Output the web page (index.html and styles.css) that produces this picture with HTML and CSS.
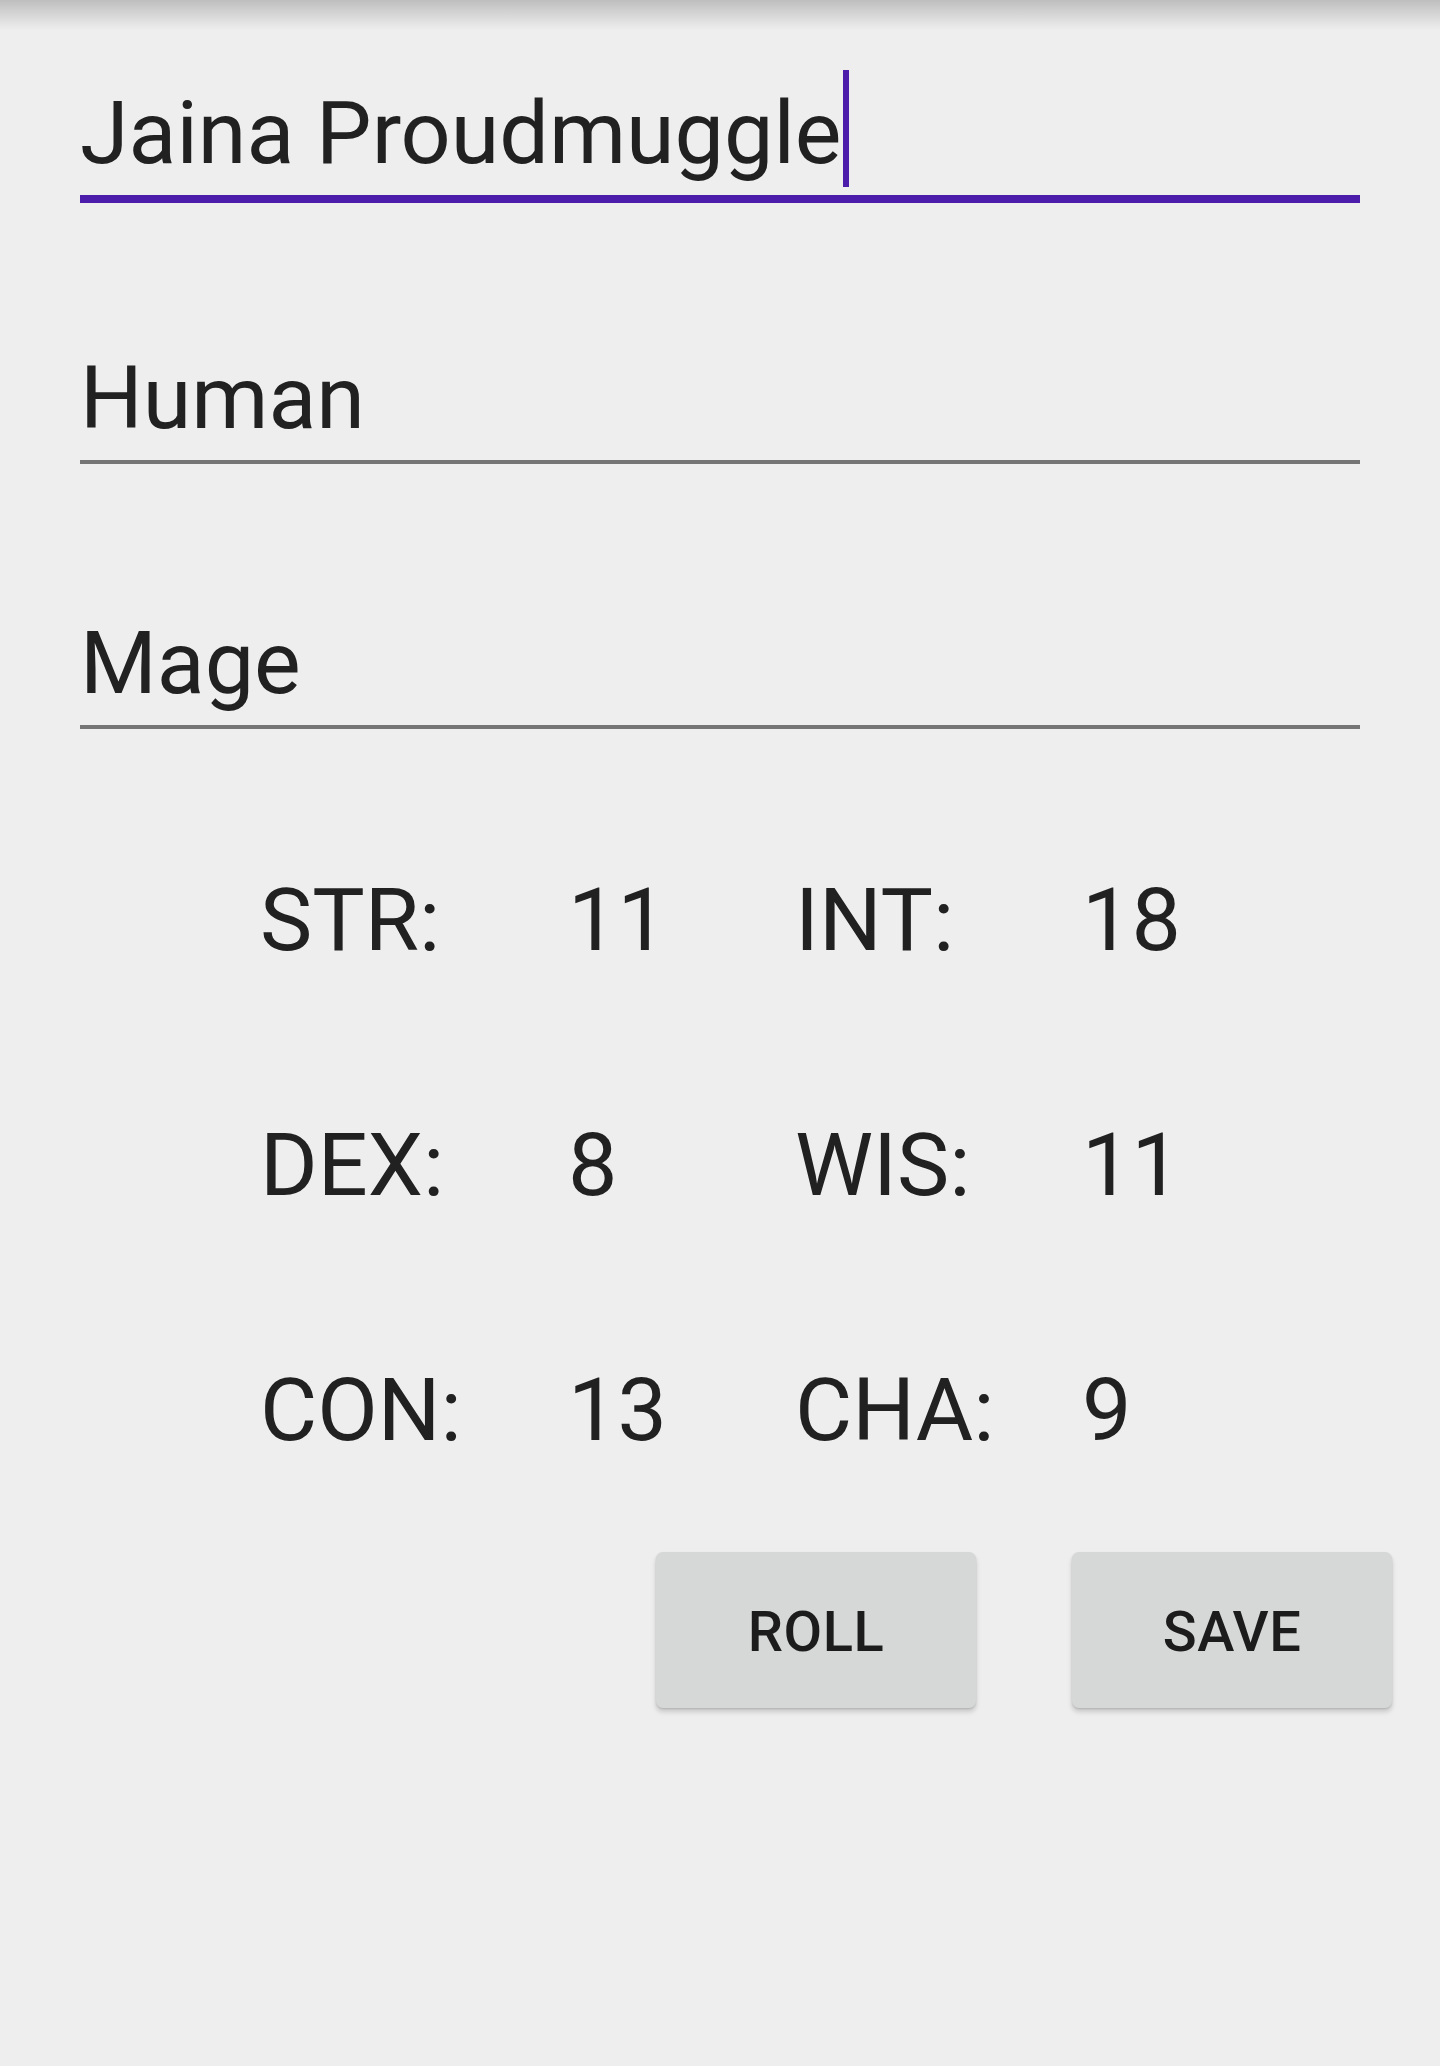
FILE: index.html
```html
<!DOCTYPE html>
<html lang="en">
<head>
<meta charset="utf-8">
<title>Character</title>
<link rel="stylesheet" href="styles.css">
</head>
<body>
<div class="screen">
  <div class="appbar-shadow"></div>
  <form class="sheet">
    <div class="field focused"><span class="caret-text">Jaina Proudmuggle</span></div>
    <div class="field">Human</div>
    <div class="field">Mage</div>

    <div class="stats">
      <div class="stat-label">STR:</div><div class="stat-value">11</div>
      <div class="stat-label">INT:</div><div class="stat-value">18</div>
      <div class="stat-label">DEX:</div><div class="stat-value">8</div>
      <div class="stat-label">WIS:</div><div class="stat-value">11</div>
      <div class="stat-label">CON:</div><div class="stat-value">13</div>
      <div class="stat-label">CHA:</div><div class="stat-value">9</div>
    </div>

    <div class="actions">
      <button type="button" class="btn">ROLL</button>
      <button type="button" class="btn">SAVE</button>
    </div>
  </form>
</div>
</body>
</html>
```
FILE: styles.css
```css
html, body {
  margin: 0;
  padding: 0;
  background: #eeeeee;
}

body {
  font-family: Roboto, "Noto Sans", "Liberation Sans", sans-serif;
  color: #212121;
  width: 1440px;
  height: 2066px;
  overflow: hidden;
}

.screen {
  display: flex;
  flex-direction: column;
}

.appbar-shadow {
  height: 30px;
  background: linear-gradient(to bottom, #bebebe 0%, #d2d2d2 40%, #eeeeee 100%);
}

.sheet {
  display: flex;
  flex-direction: column;
  padding-top: 51px;
  margin: 0;
}

.field {
  margin: 0 80px 147px 80px;
  font-size: 88px;
  line-height: 103px;
  padding-bottom: 11px;
  border-bottom: 4px solid #757575;
  white-space: nowrap;
}

.field.focused {
  border-bottom: 8px solid #4c1caa;
  margin-bottom: 143px;
}

.caret-text {
  position: relative;
}

.caret-text::after {
  content: "";
  position: absolute;
  left: calc(100% + 1px);
  top: -11px;
  width: 6px;
  height: 117px;
  background: #4c1caa;
}

.stats {
  display: grid;
  grid-template-columns: 308px 227px 287px auto;
  grid-auto-rows: 245px;
  margin: -79px 0 0 260px;
  font-size: 88px;
  line-height: 245px;
}

.actions {
  display: flex;
  justify-content: flex-end;
  gap: 96px;
  padding-right: 48px;
  margin-top: 20px;
}

.btn {
  width: 320px;
  height: 156px;
  border: none;
  border-radius: 7px;
  background: #d6d7d7;
  box-shadow: 0 4px 5px rgba(0, 0, 0, 0.16), 0 1px 2px rgba(0, 0, 0, 0.12);
  font-family: Roboto, "Noto Sans", "Liberation Sans", sans-serif;
  font-weight: 500;
  font-size: 56px;
  color: #1c1c1c;
  padding: 4px 0 0 0;
  display: flex;
  align-items: center;
  justify-content: center;
  letter-spacing: 0.5px;
}
```
